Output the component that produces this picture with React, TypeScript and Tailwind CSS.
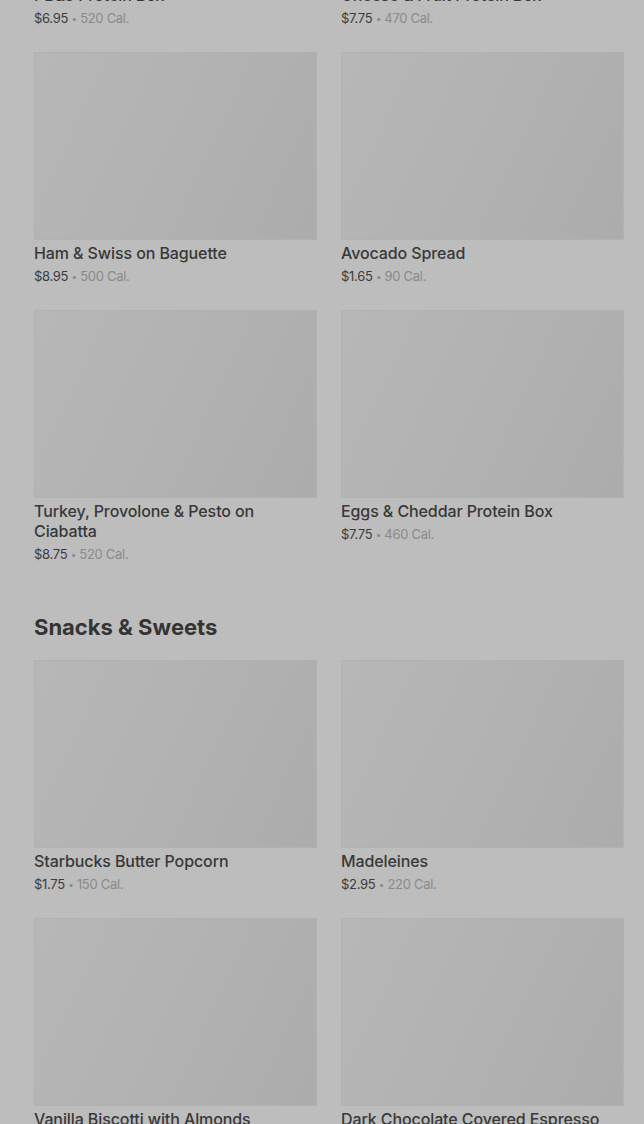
import React from "react";

interface Item {
  name: string;
  price: string;
  cal: string;
}

const sandwiches: Item[] = [
  { name: "PB&J Protein Box", price: "$6.95", cal: "520 Cal." },
  { name: "Cheese & Fruit Protein Box", price: "$7.75", cal: "470 Cal." },
  { name: "Ham & Swiss on Baguette", price: "$8.95", cal: "500 Cal." },
  { name: "Avocado Spread", price: "$1.65", cal: "90 Cal." },
  { name: "Turkey, Provolone & Pesto on Ciabatta", price: "$8.75", cal: "520 Cal." },
  { name: "Eggs & Cheddar Protein Box", price: "$7.75", cal: "460 Cal." },
];

const snacks: Item[] = [
  { name: "Starbucks Butter Popcorn", price: "$1.75", cal: "150 Cal." },
  { name: "Madeleines", price: "$2.95", cal: "220 Cal." },
  { name: "Vanilla Biscotti with Almonds", price: "$1.25", cal: "110 Cal." },
  { name: "Dark Chocolate Covered Espresso Beans", price: "$2.95", cal: "210 Cal." },
];

const ProductCard: React.FC<{ item: Item }> = ({ item }) => (
  <div>
    <div className="h-[188px] border border-[#b1b1b1] bg-linear-[115deg] from-[#b7b7b7] via-[#b2b2b2] to-[#acacac]" />
    <div className="mt-[3px] text-[16px] leading-5 font-medium tracking-[-0.1px] text-[#383838]">
      {item.name}
    </div>
    <div className="mt-[4px] h-[18px] overflow-visible text-[13px] leading-[18px] tracking-[-0.3px]">
      <span className="text-[#3c3c3c]">{item.price}</span>
      <span className="text-[#8a8a8a]">
        {" "}
        <span className="relative -top-[1px] text-[10px] leading-none">•</span> {item.cal}
      </span>
    </div>
  </div>
);

const ProductGrid: React.FC<{ items: Item[] }> = ({ items }) => (
  <div className="grid grid-cols-[283px_283px] gap-x-[24px] gap-y-[25px]">
    {items.map((item) => (
      <ProductCard key={item.name} item={item} />
    ))}
  </div>
);

export default function App() {
  return (
    <div
      className="h-[1124px] w-[644px] overflow-hidden bg-[#bdbdbd]"
      style={{ fontFamily: "Inter, 'Noto Sans', sans-serif" }}
    >
      <div className="-mt-[206px] pl-[34px] pr-[20px]">
        {/* Sandwiches & Protein Boxes */}
        <ProductGrid items={sandwiches} />

        {/* Snacks & Sweets */}
        <h2 className="mt-[50px] mb-[19px] text-[22px] leading-[28px] font-bold text-[#343434]">
          Snacks &amp; Sweets
        </h2>
        <ProductGrid items={snacks} />
      </div>
    </div>
  );
}
